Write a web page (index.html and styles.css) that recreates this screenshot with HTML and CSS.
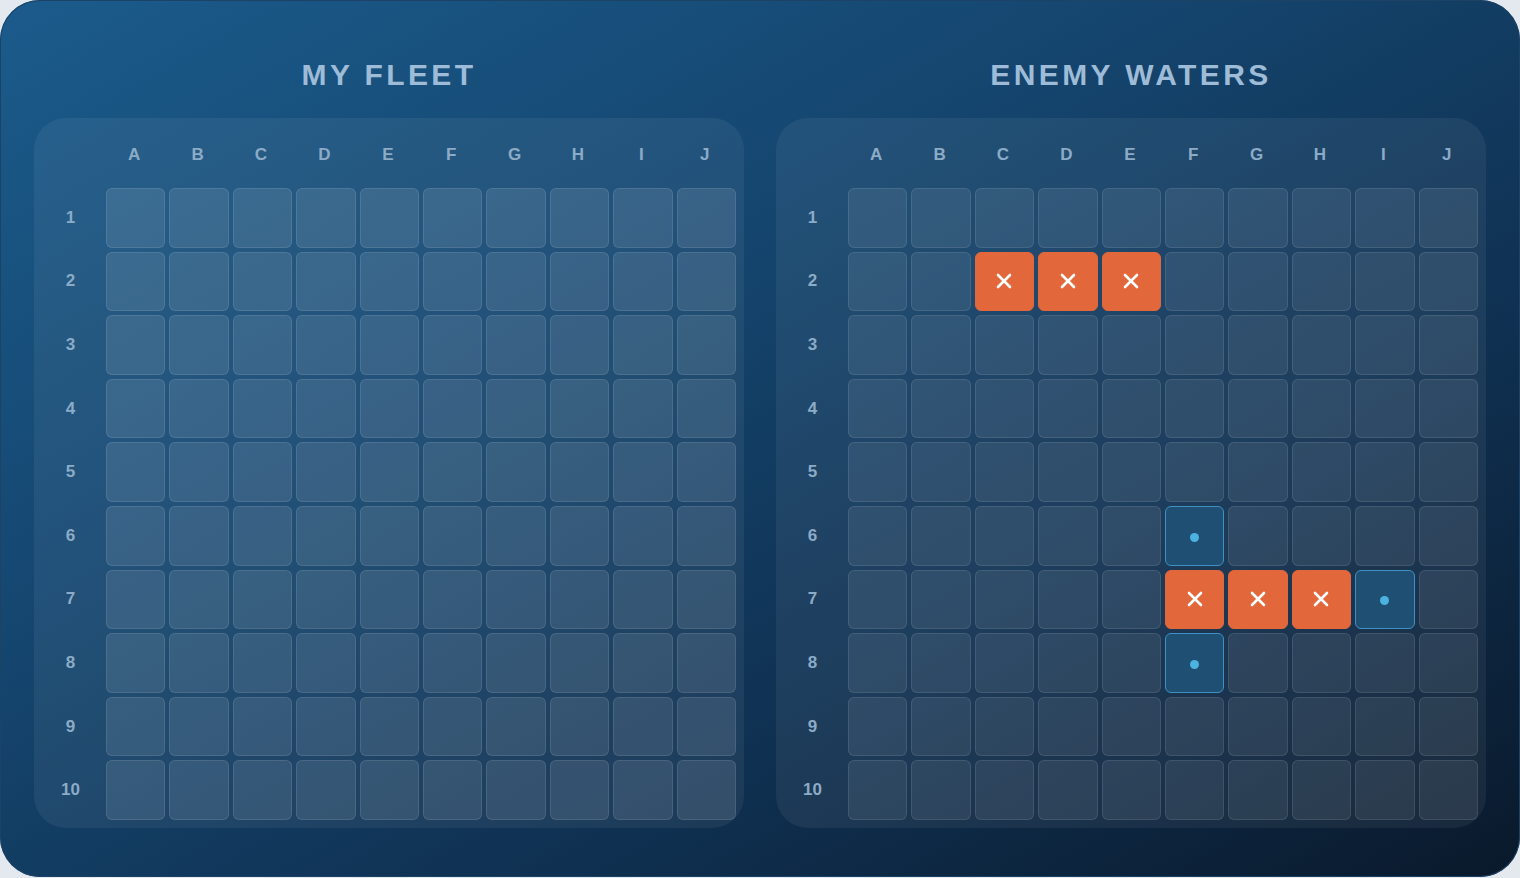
FILE: index.html
```html
<!DOCTYPE html>
<html lang="en">
<head>
    <meta charset="UTF-8">
    <title>Battleship</title>
    <link rel="stylesheet" href="styles.css">
</head>
<body>
    <div class="board">
        <section class="side">
            <h2 class="side-title">MY FLEET</h2>
            <div class="grid" id="fleet"></div>
        </section>
        <section class="side">
            <h2 class="side-title">ENEMY WATERS</h2>
            <div class="grid enemy" id="enemy"></div>
        </section>
    </div>
    <script src="app.js"></script>
</body>
</html>
```

FILE: styles.css
```css
* {
    box-sizing: border-box;
}
body {
    margin: 0;
    background: #e4e9ef;
    font-family: "Liberation Sans", Arial, sans-serif;
}
.board {
    width: 1520px;
    height: 877px;
    display: flex;
    gap: 32px;
    padding: 56px 34px 0;
    border-radius: 40px;
    background: linear-gradient(to bottom right, #1b5b8b 0%, #154771 35%, #0f2f4f 70%, #0a192b 100%);
    box-shadow: inset 0 0 0 1px #1c4266;
}
.side {
    flex: 1;
    display: flex;
    flex-direction: column;
}
.side-title {
    margin: 0 0 26px;
    height: 36px;
    line-height: 37px;
    text-align: center;
    font-size: 30px;
    font-weight: bold;
    letter-spacing: 3.4px;
    color: #9ebcd7;
}
.grid {
    height: 710px;
    padding: 8px;
    border-radius: 32px;
    background: rgba(255, 255, 255, 0.06);
    display: grid;
    grid-template-columns: 60px repeat(10, 1fr);
    grid-template-rows: 58px repeat(10, 1fr);
    gap: 4px;
}
.label {
    display: flex;
    align-items: center;
    justify-content: center;
    padding-right: 3px;
    font-size: 17px;
    font-weight: bold;
    color: #8cabc7;
}
.cell {
    border-radius: 6px;
    background: rgba(255, 255, 255, 0.1);
    border: 1.5px solid rgba(255, 255, 255, 0.1);
    display: flex;
    align-items: center;
    justify-content: center;
}
.enemy .cell {
    background: rgba(255, 255, 255, 0.08);
}
.enemy .cell.hit {
    background: #e2683b;
    border-color: #e2683b;
}
.enemy .cell.miss {
    background: #1f5073;
    border-color: #3f90c3;
}
.dot {
    width: 9px;
    height: 9px;
    border-radius: 50%;
    background: #4cb2e2;
    margin-top: 3px;
}
.cross {
    width: 20px;
    height: 20px;
}
```

FILE: app.js
```js
const letters = "ABCDEFGHIJ".split("");
const hits = ["C2", "D2", "E2", "F7", "G7", "H7"];
const misses = ["F6", "I7", "F8"];

function label(text) {
    const el = document.createElement("div");
    el.className = "label";
    el.textContent = text;
    return el;
}

function buildGrid(el, marks) {
    el.appendChild(document.createElement("div"));
    letters.forEach(l => el.appendChild(label(l)));
    for (let r = 1; r <= 10; r++) {
        el.appendChild(label(r));
        letters.forEach(l => {
            const cell = document.createElement("div");
            cell.className = "cell";
            const key = l + r;
            if (marks && hits.includes(key)) {
                cell.classList.add("hit");
                cell.innerHTML = '<svg class="cross" viewBox="0 0 20 20"><path d="M4 4L16 16M16 4L4 16" stroke="#fff" stroke-width="2.6" stroke-linecap="round"/></svg>';
            } else if (marks && misses.includes(key)) {
                cell.classList.add("miss");
                cell.innerHTML = '<span class="dot"></span>';
            }
            el.appendChild(cell);
        });
    }
}

buildGrid(document.getElementById("fleet"), false);
buildGrid(document.getElementById("enemy"), true);
```
